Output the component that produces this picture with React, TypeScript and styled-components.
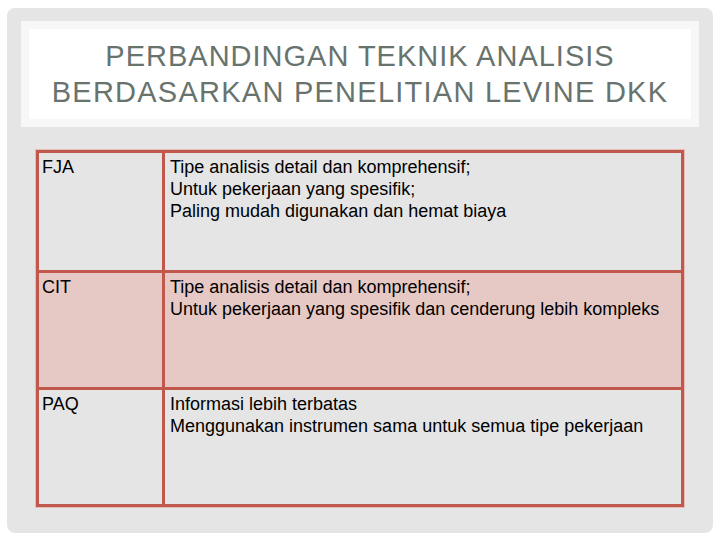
import React from 'react';
import styled, { createGlobalStyle } from 'styled-components';

const GlobalStyle = createGlobalStyle`
  html, body {
    margin: 0;
    padding: 0;
    background: #ffffff;
  }
  body {
    font-family: "Liberation Sans", Arial, sans-serif;
  }
`;

const Slide = styled.div`
  width: 720px;
  height: 540px;
  box-sizing: border-box;
  padding: 8px 7px 7px 7px;
  background: #ffffff;
`;

const Card = styled.div`
  height: 100%;
  box-sizing: border-box;
  background: #e5e5e5;
  border-radius: 8px;
  padding: 13px 14px 0 14px;
  display: flex;
  flex-direction: column;
`;

const TitleBox = styled.div`
  height: 106px;
  box-sizing: border-box;
  background: #ffffff;
  border: 8px solid #f7f7f7;
  display: flex;
  flex-direction: column;
  align-items: center;
  justify-content: center;
`;

const TitleLine = styled.div<{ $spacing: number }>`
  color: #68736e;
  font-size: 29px;
  line-height: 36px;
  letter-spacing: ${({ $spacing }) => $spacing}px;
  white-space: nowrap;
`;

const Table = styled.div`
  margin: 23px 15px 0 15px;
  display: grid;
  grid-template-columns: 126px 1fr;
  border: 3px solid #c0584c;
  box-shadow: 0 0 0 1px rgba(232, 160, 150, 0.6);
`;

const Cell = styled.div<{ $shade?: boolean; $first?: boolean }>`
  height: 117px;
  box-sizing: border-box;
  padding: 3px 6px 0 5px;
  background: ${({ $shade }) => ($shade ? '#e6c9c5' : 'transparent')};
  border-top: ${({ $first }) => ($first ? 'none' : '3px solid #c0584c')};
  font-size: 18px;
  line-height: 22px;
  color: #000000;
`;

const LabelCell = styled(Cell)`
  padding-left: 3px;
  border-right: 3px solid #c0584c;
`;

const rows = [
  {
    label: 'FJA',
    lines: [
      'Tipe analisis detail dan komprehensif;',
      'Untuk pekerjaan yang spesifik;',
      'Paling mudah digunakan dan hemat biaya',
    ],
  },
  {
    label: 'CIT',
    lines: [
      'Tipe analisis detail dan komprehensif;',
      'Untuk pekerjaan yang spesifik dan cenderung lebih kompleks',
    ],
  },
  {
    label: 'PAQ',
    lines: [
      'Informasi lebih terbatas',
      'Menggunakan instrumen sama untuk semua tipe pekerjaan',
    ],
  },
];

const App: React.FC = () => {
  return (
    <>
      <GlobalStyle />
      <Slide>
        <Card>
          <TitleBox>
            <TitleLine $spacing={1}>PERBANDINGAN TEKNIK ANALISIS</TitleLine>
            <TitleLine $spacing={1.25}>BERDASARKAN PENELITIAN LEVINE DKK</TitleLine>
          </TitleBox>
          <Table>
            {rows.map((row, i) => (
              <React.Fragment key={row.label}>
                <LabelCell $shade={i === 1} $first={i === 0}>
                  {row.label}
                </LabelCell>
                <Cell $shade={i === 1} $first={i === 0}>
                  {row.lines.map((line) => (
                    <div key={line}>{line}</div>
                  ))}
                </Cell>
              </React.Fragment>
            ))}
          </Table>
        </Card>
      </Slide>
    </>
  );
};

export default App;
